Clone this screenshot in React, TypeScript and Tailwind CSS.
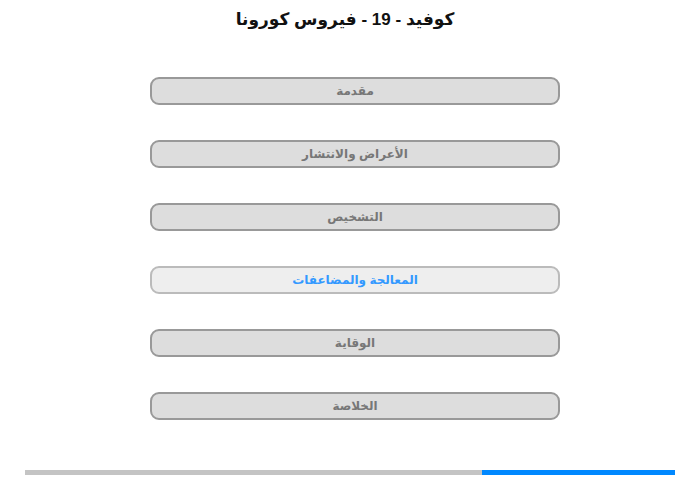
const sections = [
  "مقدمة",
  "الأعراض والانتشار",
  "التشخيص",
  "المعالجة والمضاعفات",
  "الوقاية",
  "الخلاصة",
];

const active = 3;

export default function App() {
  return (
    <div
      dir="rtl"
      className="w-[700px] h-[480px] bg-white flex flex-col items-center"
      style={{ fontFamily: '"Liberation Sans", "DejaVu Sans", sans-serif' }}
    >
      <h1 className="mt-[8px] pr-[10px] text-[17px] leading-[24px] font-bold text-[#111]">
        كوفيد - 19 - فيروس كورونا
      </h1>
      <div className="mt-[45px] pl-[10px] flex flex-col gap-[35px]">
        {sections.map((s, i) => (
          <div
            key={s}
            className={
              i === active
                ? "w-[410px] h-[28px] rounded-[9px] border-2 border-[#bbbbbb] bg-[#eeeeee] flex items-center justify-center text-[12px] font-bold text-[#3399ff]"
                : "w-[410px] h-[28px] rounded-[9px] border-2 border-[#999999] bg-[#dddddd] flex items-center justify-center text-[12px] font-bold text-[#777777]"
            }
          >
            {s}
          </div>
        ))}
      </div>
      <div dir="ltr" className="mt-[50px] w-[650px] h-[5px] flex">
        <div className="w-[457px] bg-[#c4c4c4]" />
        <div className="flex-1 bg-[#0088ff]" />
      </div>
    </div>
  );
}
